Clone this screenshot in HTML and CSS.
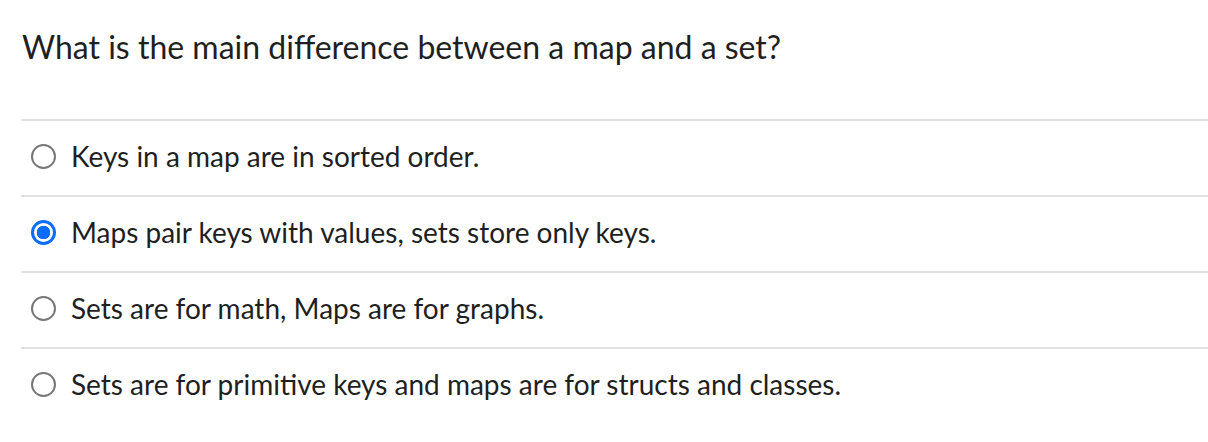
FILE: index.html
```html
<!DOCTYPE html>
<html>
<head>
<meta charset="utf-8">
<link rel="stylesheet" href="styles.css">
</head>
<body>
<div class="quiz">
  <h1 class="question">What is the main difference between a map and a set?</h1>
  <ul class="answers">
    <li class="answer"><span class="radio"></span><span class="label">Keys in a map are in sorted order.</span></li>
    <li class="answer"><span class="radio checked"></span><span class="label">Maps pair keys with values, sets store only keys.</span></li>
    <li class="answer"><span class="radio"></span><span class="label">Sets are for math, Maps are for graphs.</span></li>
    <li class="answer"><span class="radio"></span><span class="label">Sets are for primitive keys and maps are for structs and classes.</span></li>
  </ul>
</div>
</body>
</html>
```
FILE: styles.css
```css
html, body {
  margin: 0;
  padding: 0;
  background: #fff;
}
body {
  font-family: Lato, "Open Sans", sans-serif;
  color: #1f1f1f;
}
.quiz {
  padding: 26px 0 0 21px;
}
.question {
  margin: 0 0 51px 1px;
  font-size: 32px;
  font-weight: 400;
  line-height: 42px;
}
.answers {
  list-style: none;
  margin: 0;
  padding: 0;
}
.answer {
  box-sizing: border-box;
  display: flex;
  align-items: center;
  gap: 15px;
  height: 76px;
  border-top: 2px solid #e0e0e0;
  padding: 0 0 4px 10px;
}
.radio {
  box-sizing: border-box;
  width: 25px;
  height: 25px;
  border-radius: 50%;
  border: 2px solid #777;
  flex: none;
  background: #fff;
}
.radio.checked {
  border: 3px solid #0b6cff;
  background: radial-gradient(circle, #0b6cff 0 6.5px, #fff 7px);
}
.label {
  font-size: 28px;
  line-height: 32px;
}
```
